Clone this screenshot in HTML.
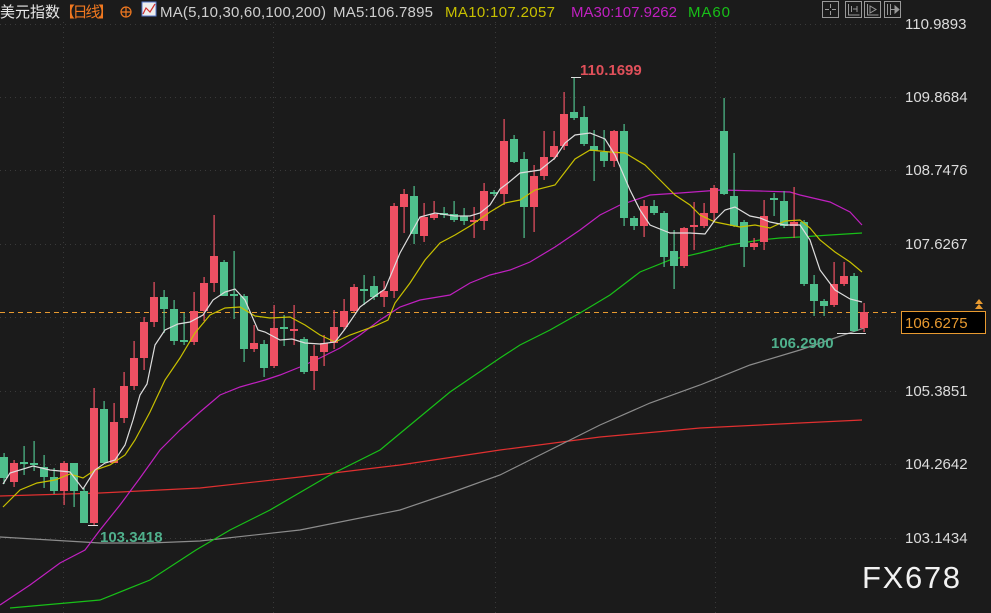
<!DOCTYPE html>
<html><head><meta charset="utf-8"><style>
html,body{margin:0;padding:0;background:#1b1b1b;width:991px;height:613px;overflow:hidden}
svg{display:block}
text{font-family:"Liberation Sans","Noto Sans CJK SC",sans-serif}
</style></head><body>
<svg id="s" width="991" height="613" viewBox="0 0 991 613" xmlns="http://www.w3.org/2000/svg">
<rect width="991" height="613" fill="#1b1b1b"/>
<g stroke="#3a3a3a" stroke-dasharray="1,4" stroke-width="1">
<line x1="0" y1="24.5" x2="898" y2="24.5"/><line x1="0" y1="97.5" x2="898" y2="97.5"/>
<line x1="0" y1="170.5" x2="898" y2="170.5"/><line x1="0" y1="244.5" x2="898" y2="244.5"/>
<line x1="0" y1="317.5" x2="898" y2="317.5"/><line x1="0" y1="391.5" x2="898" y2="391.5"/>
<line x1="0" y1="464.5" x2="898" y2="464.5"/><line x1="0" y1="538.5" x2="898" y2="538.5"/>
<line x1="63.5" y1="22" x2="63.5" y2="613"/><line x1="273.5" y1="22" x2="273.5" y2="613"/>
<line x1="495.5" y1="22" x2="495.5" y2="613"/><line x1="715.5" y1="22" x2="715.5" y2="613"/>
</g>
<line x1="0" y1="312.5" x2="900" y2="312.5" stroke="#e89a30" stroke-dasharray="5,4" stroke-width="1"/>
<g fill="none" stroke-width="1.2">
<polyline stroke="#e03030" points="0,496 100,493 200,488 300,477 400,465 500,450 600,437 700,428 800,423 862,420"/>
<polyline stroke="#8c8c8c" points="0,537 50,540 100,543 150,543 200,541 300,530 400,510 450,493 500,475 550,450 600,425 650,403 700,385 750,365 800,350 864,328"/>
<polyline stroke="#18c018" points="10,608 100,600 150,580 196,550 230,530 270,510 330,475 380,450 450,392 500,358 520,345 550,330 580,313 610,295 640,272 670,260 700,253 730,245 760,240 780,238 800,237 830,235 862,233"/>
<polyline stroke="#c020c0" points="0,605 30,585 60,563 85,550 100,530 120,505 140,478 160,450 180,430 200,412 220,395 240,387 265,380 280,375 300,367 320,358 340,348 360,335 380,320 400,307 420,300 450,295 470,283 490,275 510,270 530,262 555,247 580,230 600,215 620,205 650,195 680,193 720,190 760,191 790,192 800,195 830,202 850,212 862,225"/>
</g>
<g id="c"></g>
<g fill="none" stroke-width="1.2">
<polyline stroke="#c8c000" points="3,507 20,490 37,483 55,480 70,474 83,478 95,470 110,465 125,455 135,440 150,412 165,380 180,358 195,333 210,315 225,308 240,307 255,316 270,318 290,317 305,325 320,335 335,342 350,335 375,326 388,320 395,303 410,283 425,260 440,243 455,235 470,226 490,212 505,203 520,200 535,190 555,185 575,159 590,150 610,152 625,153 645,165 660,180 675,195 690,205 700,215 715,222 730,225 740,227 755,225 770,228 785,221 800,220 810,228 820,240 835,252 850,262 862,272"/>
<polyline stroke="#dddddd" points="3,484 10,473 33,466 50,470 70,472 83,489 95,470 105,463 115,460 125,445 133,420 140,395 147,384 155,345 165,330 178,324 190,322 203,315 213,300 225,292 235,289 245,300 258,330 265,332 280,340 292,339 305,343 320,344 335,342 345,329 360,307 375,296 385,289 400,253 420,217 435,213 455,216 470,216 480,213 490,205 500,189 508,183 520,173 540,170 555,158 565,143 575,135 590,133 605,139 615,155 630,190 640,210 650,225 670,233 690,233 705,234 715,220 725,210 735,207 750,216 760,218 770,222 785,225 800,225 810,240 820,270 835,290 850,299 862,302"/>
</g>
<g stroke="#ddd" stroke-width="1"><line x1="571" y1="77.5" x2="581" y2="77.5"/><line x1="88" y1="525.5" x2="98" y2="525.5"/><line x1="837" y1="333.5" x2="866" y2="333.5"/></g>
<text x="580" y="75" fill="#e0505a" font-size="15" font-weight="bold">110.1699</text>
<text x="100" y="542" fill="#4fb08c" font-size="15" font-weight="bold">103.3418</text>
<text x="771" y="348" fill="#4fb08c" font-size="15" font-weight="bold">106.2900</text>
<g fill="#dcdcdc" font-size="15">
<text x="905" y="29">110.9893</text><text x="905" y="102">109.8684</text>
<text x="905" y="175">108.7476</text><text x="905" y="249">107.6267</text>
<text x="905" y="396">105.3851</text><text x="905" y="469">104.2642</text>
<text x="905" y="543">103.1434</text>
</g>
<rect x="901.5" y="311.5" width="84" height="22" fill="#000" stroke="#e89a30"/>
<text x="905" y="328" fill="#e89a30" font-size="15">106.6275</text>
<path d="M975,304 l4,-5 l4,5z M975,309 l4,-5 l4,5z" fill="#e89a30"/>
<text x="0" y="17" font-size="15" fill="#e8e8e8" textLength="60">美元指数</text>
<text x="60" y="17" font-size="15" fill="#f07820" textLength="53">【日线】</text>
<circle cx="126" cy="12" r="5" fill="none" stroke="#f07820" stroke-width="1.2"/>
<path d="M121,12h10M126,7v10" stroke="#f07820" stroke-width="1.2"/>
<rect x="142" y="2" width="14" height="14" fill="#eee" stroke="#5577cc"/>
<polyline points="143,14 146,8 150,12 155,4" fill="none" stroke="#d03030" stroke-width="1.2"/>
<g font-size="15">
<text x="160" y="17" fill="#cfcfcf" textLength="166">MA(5,10,30,60,100,200)</text>
<text x="333" y="17" fill="#cfcfcf" textLength="100">MA5:106.7895</text>
<text x="445" y="17" fill="#c8c000" textLength="110">MA10:107.2057</text>
<text x="571" y="17" fill="#c020c0" textLength="106">MA30:107.9262</text>
<text x="688" y="17" fill="#18c018" textLength="42">MA60</text>
</g>
<g fill="none" stroke="#999" stroke-width="1">
<rect x="822.5" y="1.5" width="16" height="16"/><rect x="845.5" y="1.5" width="16" height="16"/>
<rect x="864.5" y="1.5" width="16" height="16"/><rect x="884.5" y="1.5" width="16" height="16"/>
<path d="M830.5,4v4M830.5,11v4M825,9.5h4M832,9.5h4"/>
<path d="M848.5,4v11h11M851.5,6v6M853,9h4M857,6v6"/>
<path d="M867.5,4v11h11M870,6v7l6,-3.5z"/>
<path d="M887.5,4v11M890.5,4v11M890,9.5h5"/><path d="M895,6v7l4,-3.5z" fill="#999"/>
</g>
<text x="862" y="588" fill="#f2f2f2" font-size="31" textLength="98">FX678</text>
</svg>
<script>
var d=[[0,457,478,453,484,'g'],[10,463,482,460,487,'r'],[20,462,464,446,475,'g'],[30,463,465,441,471,'g'],[40,467,477,455,488,'g'],[50,477,491,468,494,'g'],[60,463,491,461,505,'r'],[70,463,491,463,507,'g'],[80,491,523,488,523,'g'],[90,408,523,388,525,'r'],[100,409,463,401,463,'g'],[110,422,463,403,463,'r'],[120,386,418,372,423,'r'],[130,358,386,341,390,'r'],[140,322,358,317,370,'r'],[150,297,322,282,327,'r'],[160,297,309,290,333,'g'],[170,309,341,300,345,'g'],[180,340,342,313,345,'g'],[190,311,342,292,345,'r'],[200,283,311,277,321,'r'],[210,256,283,215,292,'r'],[220,262,296,260,296,'g'],[230,294,296,251,319,'g'],[240,296,349,294,362,'g'],[250,343,349,325,352,'r'],[260,344,368,340,377,'g'],[270,328,366,305,368,'r'],[280,327,329,315,346,'g'],[290,329,331,305,345,'r'],[300,339,372,337,374,'g'],[310,356,371,345,390,'r'],[320,343,352,335,366,'r'],[330,327,343,310,349,'r'],[340,311,327,299,330,'r'],[350,287,311,284,312,'r'],[360,289,291,275,305,'g'],[370,286,297,276,300,'g'],[380,291,297,281,307,'r'],[390,206,291,203,298,'r'],[400,194,207,189,233,'r'],[410,196,234,186,244,'g'],[420,217,236,203,242,'r'],[430,214,218,201,220,'r'],[440,213,215,207,218,'g'],[450,214,220,201,222,'g'],[460,216,221,208,225,'g'],[470,220,222,207,238,'r'],[480,191,221,183,230,'r'],[490,192,194,190,196,'g'],[500,141,194,119,205,'r'],[510,139,162,135,163,'g'],[520,159,207,152,238,'g'],[530,176,207,165,232,'r'],[540,157,176,131,180,'r'],[550,146,157,131,160,'r'],[560,114,146,92,150,'r'],[570,112,118,78,120,'g'],[580,117,144,106,146,'g'],[590,146,151,130,181,'g'],[600,152,161,130,167,'g'],[610,131,161,130,167,'r'],[620,131,218,124,226,'g'],[630,218,226,216,230,'g'],[640,206,226,200,237,'r'],[650,206,213,200,215,'g'],[660,213,257,211,267,'g'],[670,251,266,230,289,'g'],[680,228,266,227,268,'r'],[690,225,227,202,250,'r'],[700,213,226,203,228,'r'],[710,188,213,185,222,'r'],[720,131,194,98,195,'g'],[730,196,226,153,227,'g'],[740,222,247,220,267,'g'],[750,243,247,238,250,'r'],[760,216,242,200,250,'r'],[770,198,200,193,216,'g'],[780,201,226,191,228,'g'],[790,222,226,187,238,'r'],[800,222,284,220,286,'g'],[810,284,301,275,316,'g'],[820,301,306,299,316,'g'],[830,284,305,262,307,'r'],[840,276,284,262,286,'r'],[850,276,331,273,332,'g'],[860,312,328,303,332,'r']];
var h='';d.forEach(function(c){var col=c[5]=='r'?'#ee5063':'#4fbf8c';
h+='<rect x="'+(c[0]+3.5)+'" y="'+c[3]+'" width="1.2" height="'+(c[4]-c[3])+'" fill="'+col+'"/>';
h+='<rect x="'+c[0]+'" y="'+c[1]+'" width="8" height="'+Math.max(2,c[2]-c[1])+'" fill="'+col+'"/>';});
document.getElementById('c').innerHTML=h;
</script>
</body></html>
